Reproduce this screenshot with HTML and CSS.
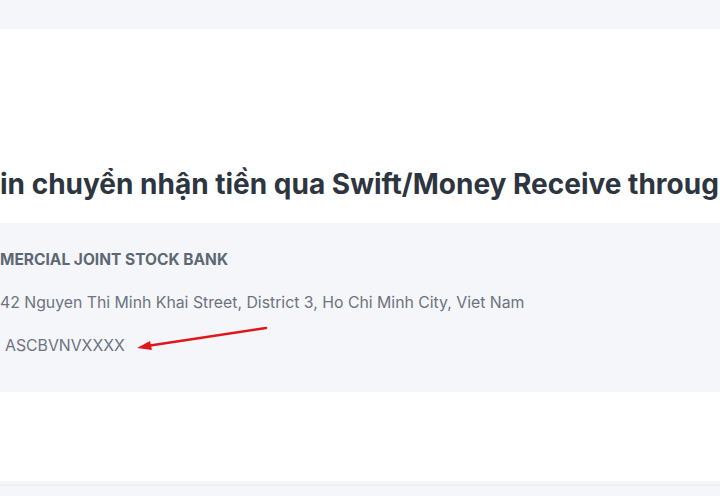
FILE: index.html
```html
<!DOCTYPE html>
<html lang="vi">
<head>
    <meta charset="UTF-8">
    <meta name="viewport" content="width=device-width, initial-scale=1.0">
    <title>Swift</title>
    <link rel="stylesheet" href="styles.css">
</head>
<body>

    <div class="topbar"></div>

    <!-- Page title -->
    <section class="title-block">
        <h1>in chuyển nhận tiền qua Swift/Money Receive through Swift</h1>
    </section>

    <!-- Bank details -->
    <section class="info">
        <p class="bank-name">MERCIAL JOINT STOCK BANK</p>
        <p class="line">42 Nguyen Thi Minh Khai Street, District 3, Ho Chi Minh City, Viet Nam</p>
        <p class="line swift">ASCBVNVXXXX</p>

        <svg class="arrow" width="140" height="30" viewBox="0 0 140 30">
            <line x1="131" y1="3" x2="12" y2="21" stroke="#e0161b" stroke-width="2.5" stroke-linecap="round"/>
            <polygon points="2,23 15,16 17,25" fill="#e0161b"/>
        </svg>
    </section>

    <section class="spacer"></section>
    <div class="footer"></div>

</body>
</html>
```

FILE: styles.css
```css
/* Basic page styling */
body {
    font-family: Inter, "Noto Sans", sans-serif;
    margin: 0;
    background-color: #f5f6f9;
    overflow: hidden;
}
.topbar {
    height: 29px;
    background-color: #f5f6f9;
}
.title-block {
    height: 194px;
    background-color: #fff;
    display: flex;
    flex-direction: column;
    justify-content: flex-end;
    box-sizing: border-box;
    padding-bottom: 21px;
}
h1 {
    margin: 0;
    font-size: 28px;
    line-height: 36px;
    font-weight: 700;
    color: #2d3540;
    white-space: nowrap;
}
.info {
    position: relative;
    height: 169px;
    box-sizing: border-box;
    padding-top: 27px;
    background-color: #f5f6f9;
}
.info p {
    margin: 0;
    font-size: 15.8px;
    line-height: 20px;
    white-space: nowrap;
}
.bank-name {
    font-size: 15.5px !important;
    font-weight: 700;
    color: #5d6875;
}
.line {
    color: #6b7480;
    margin-top: 23px !important;
}
.swift {
    padding-left: 5px;
}
.arrow {
    position: absolute;
    left: 135px;
    top: 102px;
}
.spacer {
    height: 89px;
    background-color: #fff;
}
.footer {
    height: 4px;
    background-color: #f3f4f6;
    border-bottom: 1px solid #ebedf2;
}
```
